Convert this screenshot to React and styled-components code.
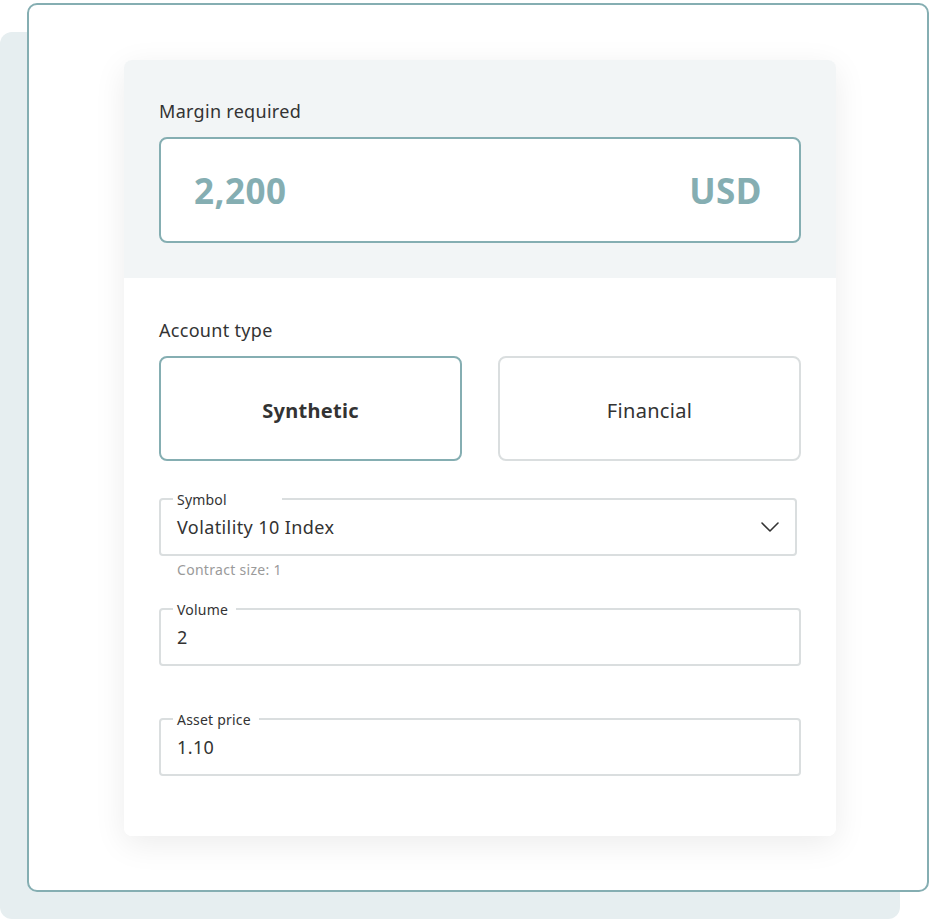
import React from 'react'
import styled, { createGlobalStyle } from 'styled-components'

const teal = '#85aeb2'
const ink = '#333333'
const line = '#dadedf'

const GlobalStyle = createGlobalStyle`
  html, body {
    margin: 0;
    padding: 0;
    background: #ffffff;
  }
  body {
    font-family: 'Noto Sans', 'Open Sans', Arial, sans-serif;
    color: ${ink};
  }
`

const Stage = styled.div`
  position: relative;
  width: 932px;
  height: 920px;
  overflow: hidden;
  &:before {
    content: '';
    position: absolute;
    left: 0;
    top: 32px;
    width: 900px;
    height: 887px;
    border-radius: 12px;
    background: #e6eef0;
  }
`

const Frame = styled.div`
  position: relative;
  z-index: 1;
  box-sizing: border-box;
  margin: 3px 0 0 27px;
  width: 902px;
  height: 889px;
  border: 2px solid ${teal};
  border-radius: 10px;
  background: #ffffff;
  padding: 55px 0 0 95px;
`

const Card = styled.div`
  width: 712px;
  border-radius: 8px;
  overflow: hidden;
  background: #ffffff;
  box-shadow: 0 8px 32px rgba(0, 0, 0, 0.08);
`

const Section = styled.div`
  box-sizing: border-box;
  background: ${(p) => (p.tinted ? '#f2f5f6' : '#ffffff')};
  padding: ${(p) => (p.tinted ? '39px 35px 35px' : '40px 35px 60px')};
`

const Heading = styled.div`
  font-size: 18px;
  line-height: 24px;
  letter-spacing: 0.3px;
  color: ${ink};
  margin-bottom: 14px;
`

const MarginBox = styled.div`
  box-sizing: border-box;
  height: 106px;
  border: 2px solid ${teal};
  border-radius: 8px;
  background: #ffffff;
  padding: 0 37px 0 33px;
  display: flex;
  align-items: center;
  justify-content: space-between;
  font-size: 35px;
  font-weight: 700;
  letter-spacing: 0.5px;
  color: ${teal};
`

const Choices = styled.div`
  display: grid;
  grid-template-columns: 1fr 1fr;
  gap: 36px;
  margin-bottom: 37px;
`

const Choice = styled.button`
  box-sizing: border-box;
  height: 105px;
  padding: 4px 0 0;
  border: 2px solid ${(p) => (p.active ? teal : line)};
  border-radius: 8px;
  background: #ffffff;
  font-family: inherit;
  font-size: 20px;
  letter-spacing: 0.3px;
  font-weight: ${(p) => (p.active ? 700 : 400)};
  color: ${ink};
  cursor: pointer;
`

const Field = styled.div`
  position: relative;
  box-sizing: border-box;
  height: 58px;
  margin-right: ${(p) => p.inset || 0}px;
  border: 2px solid ${line};
  border-radius: 4px;
  padding: 0 16px;
  display: flex;
  align-items: center;
  justify-content: space-between;
  font-size: 18px;
  letter-spacing: 0.4px;
  color: ${ink};
`

const FieldLabel = styled.span`
  position: absolute;
  top: -9px;
  left: 12px;
  min-width: ${(p) => p.notch || 0}px;
  box-sizing: border-box;
  padding: 0 8px 0 4px;
  background: #ffffff;
  font-size: 14px;
  line-height: 18px;
  letter-spacing: 0.2px;
  color: ${ink};
`

const Helper = styled.div`
  box-sizing: border-box;
  height: 52px;
  padding: 5px 0 0 18px;
  font-size: 14px;
  line-height: 18px;
  letter-spacing: 0.3px;
  color: #9a9a9a;
`

const Chevron = () => (
  <svg width="18" height="10" viewBox="0 0 18 10" fill="none">
    <path d="M1 1l8 8 8-8" stroke={ink} strokeWidth="1.6" strokeLinecap="round" strokeLinejoin="round" />
  </svg>
)

function TextField({ label, value, notch, inset, children }) {
  return (
    <Field inset={inset}>
      <FieldLabel notch={notch}>{label}</FieldLabel>
      <span>{value}</span>
      {children}
    </Field>
  )
}

export default function App() {
  return (
    <>
      <GlobalStyle />
      <Stage>
        <Frame>
          <Card>
            <Section tinted>
              <Heading>Margin required</Heading>
              <MarginBox>
                <span>2,200</span>
                <span>USD</span>
              </MarginBox>
            </Section>
            <Section>
              <Heading>Account type</Heading>
              <Choices>
                <Choice active>Synthetic</Choice>
                <Choice>Financial</Choice>
              </Choices>
              <TextField label="Symbol" value="Volatility 10 Index" notch={109} inset={4}>
                <Chevron />
              </TextField>
              <Helper>Contract size: 1</Helper>
              <TextField label="Volume" value="2" />
              <Helper />
              <TextField label="Asset price" value="1.10" />
            </Section>
          </Card>
        </Frame>
      </Stage>
    </>
  )
}
